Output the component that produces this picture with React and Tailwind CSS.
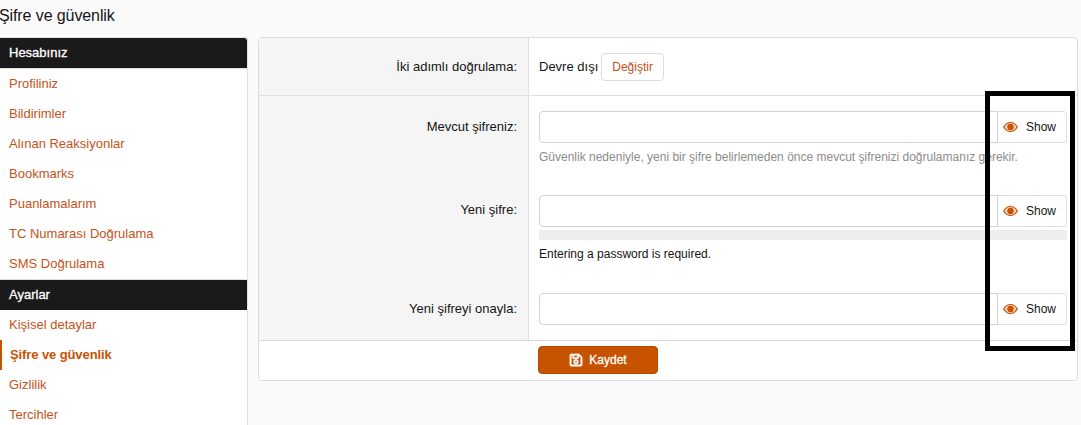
import React from 'react';
import { FaRegSave } from 'react-icons/fa';

const accountLinks = ['Profiliniz', 'Bildirimler', 'Alınan Reaksiyonlar', 'Bookmarks', 'Puanlamalarım', 'TC Numarası Doğrulama', 'SMS Doğrulama'];
const settingsLinks = ['Kişisel detaylar', 'Şifre ve güvenlik', 'Gizlilik', 'Tercihler'];

function SideHeader({ children, className = '' }) {
  return <div className={`h-[30px] leading-[30px] px-[9px] bg-[#1a1a1a] text-white text-[13px] [-webkit-text-stroke:0.3px_white] ${className}`}>{children}</div>;
}

function SideLink({ label, active }) {
  if (active) {
    return (
      <div className="h-[30px] leading-[30px] pl-2 border-l-2 border-[#c75300] text-[#c75300] text-[13px] font-bold tracking-[-0.1px]">
        {label}
      </div>
    );
  }
  return <div className="h-[30px] leading-[30px] px-[9px] text-[#c5521a] text-[13px]">{label}</div>;
}

function EyeIcon() {
  return (
    <svg viewBox="0 0 16 12" className="w-[15px] h-[12px] text-[#c75300]">
      <path d="M.8 6C2.4 3 5 1.2 8 1.2S13.6 3 15.2 6C13.6 9 11 10.8 8 10.8S2.4 9 .8 6Z" fill="currentColor" fillOpacity="0.25" stroke="currentColor" strokeWidth="1.3" />
      <circle cx="8" cy="6" r="3.4" fill="currentColor" />
    </svg>
  );
}

function PasswordInput() {
  return (
    <div className="flex h-8">
      <div className="flex-1 bg-white border border-[#d2d2d2] rounded-l-[4px]" />
      <div className="w-[69px] flex items-center gap-2 pl-[5px] bg-white border border-l-0 border-[#e0e0e0] rounded-r-[4px] text-[12px] text-[#141414]">
        <EyeIcon />
        <span>Show</span>
      </div>
    </div>
  );
}

function Row({ label, className, labelClass, children }) {
  return (
    <div className={`flex ${className}`}>
      <div className={`w-[270px] shrink-0 bg-[#f5f5f5] border-r border-[#e0e0e0] text-right pr-[11px] text-[13px] text-[#141414] ${labelClass}`}>
        {label}
      </div>
      <div className="flex-1 min-w-0 pl-[10px] pr-[10px]">{children}</div>
    </div>
  );
}

export default function App() {
  return (
    <div className="relative w-[1081px] h-[425px] overflow-hidden bg-[#fafafa] font-['Liberation_Sans',Arial,sans-serif]">
      <h1 className="h-[37px] pt-[6px] -ml-px text-[16px] leading-5 font-normal tracking-[-0.1px] text-[#141414]">Şifre ve güvenlik</h1>

      <div className="flex items-start">
        <aside className="w-[248px] shrink-0 h-[388px] bg-white border-t border-r border-[#e0e0e0]">
          <SideHeader className="rounded-tr-[3px]">Hesabınız</SideHeader>
          <div className="border-t border-[#e0e0e0]">
            {accountLinks.map((label) => (
              <SideLink key={label} label={label} />
            ))}
          </div>
          <div className="h-px bg-[#e0e0e0]" />
          <SideHeader>Ayarlar</SideHeader>
          {settingsLinks.map((label) => (
            <SideLink key={label} label={label} active={label === 'Şifre ve güvenlik'} />
          ))}
        </aside>

        <main className="ml-[10px] w-[820px] bg-white border border-[#dcdcdc] rounded-[4px] overflow-hidden">
          <Row label="İki adımlı doğrulama:" className="h-[58px] border-b border-[#e0e0e0]" labelClass="pt-[20px] leading-[18px]">
            <div className="flex items-center h-[57px] pt-[1px] text-[13px] text-[#141414]">
              <span>Devre dışı</span>
              <span className="ml-[3px] h-[28px] px-[10px] leading-[26px] border border-[#dcdcdc] rounded-[4px] bg-white text-[12px] text-[#c5521a]">Değiştir</span>
            </div>
          </Row>

          <Row label="Mevcut şifreniz:" className="h-[84px]" labelClass="pt-[22px] leading-[18px]">
            <div className="pt-[15px]">
              <PasswordInput />
              <p className="mt-[6px] text-[12px] leading-4 text-[#8c8c8c]">Güvenlik nedeniyle, yeni bir şifre belirlemeden önce mevcut şifrenizi doğrulamanız gerekir.</p>
            </div>
          </Row>

          <Row label="Yeni şifre:" className="h-[113px]" labelClass="pt-[21px] leading-[18px]">
            <div className="pt-[15px]">
              <PasswordInput />
              <div className="mt-[3px] h-[10px] bg-[#eeeeee]" />
              <p className="mt-[6px] text-[12px] leading-4 text-[#141414]">Entering a password is required.</p>
            </div>
          </Row>

          <Row label="Yeni şifreyi onayla:" className="h-[47px]" labelClass="pt-[7px] leading-[18px]">
            <PasswordInput />
          </Row>

          <div className="h-[40px] border-t border-[#d8d8d8] flex justify-start pl-[279px] pt-[5px]">
            <div className="w-[120px] h-[28px] flex items-center justify-center gap-[6px] bg-[#c75300] border border-[#b34a00] rounded-[4px] text-white text-[12px] [-webkit-text-stroke:0.3px_white]">
              <FaRegSave className="w-[14px] h-[14px]" stroke="currentColor" strokeWidth="20" />
              <span>Kaydet</span>
            </div>
          </div>
        </main>
      </div>

      {/* hand-drawn annotation over the screenshot */}
      <div className="absolute left-[985px] top-[91px] w-[90px] h-[260px] border-[5px] border-black" />
    </div>
  );
}
